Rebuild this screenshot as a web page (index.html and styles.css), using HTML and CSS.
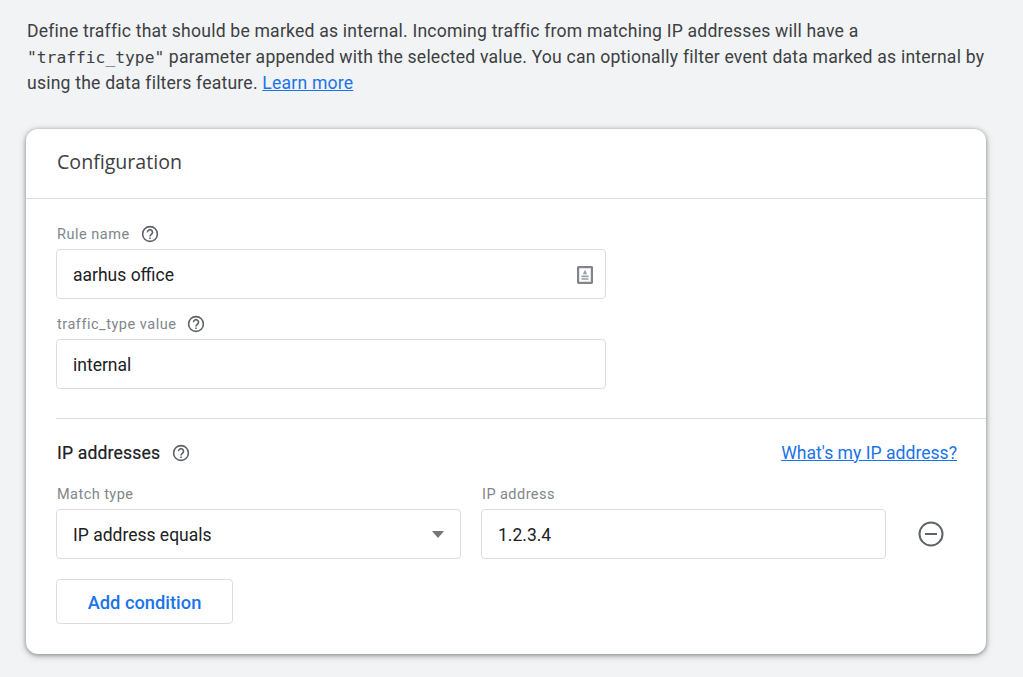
FILE: index.html
```html
<!DOCTYPE html>
<html lang="en">
<head>
<meta charset="utf-8">
<title>Internal traffic</title>
<link rel="stylesheet" href="styles.css">
</head>
<body>
<p class="intro">Define traffic that should be marked as internal. Incoming traffic from matching IP addresses will have a <code class="mono">"traffic_type"</code> parameter appended with the selected value. You can optionally filter event data marked as internal by using the data filters feature. <a class="link" href="#">Learn more</a></p>
<main class="card">
  <h2 class="card-title">Configuration</h2>
  <section class="card-top">
    <div class="label-row"><span class="label">Rule name</span>
      <svg class="help" viewBox="0 0 18 18"><circle cx="9" cy="9" r="7.4"/><path d="M6.5 7.2a2.5 2.5 0 1 1 4 2c-.9.7-1.5 1.1-1.5 2.3"/><path class="dot" d="M8.2 12.5h1.6v1.6H8.2z"/></svg>
    </div>
    <div class="field field-wide"><span>aarhus office</span>
      <svg class="contact" viewBox="0 0 16 18"><rect x="1" y="1" width="14" height="16" rx="1.2"/><path class="solid" d="M8 3.8l2.2 4.4H5.8zM4.5 9.6h7v1.6h-7zM4.5 12.2h7v1.6h-7z"/></svg>
    </div>
    <div class="label-row label-row-second"><span class="label">traffic_type value</span>
      <svg class="help" viewBox="0 0 18 18"><circle cx="9" cy="9" r="7.4"/><path d="M6.5 7.2a2.5 2.5 0 1 1 4 2c-.9.7-1.5 1.1-1.5 2.3"/><path class="dot" d="M8.2 12.5h1.6v1.6H8.2z"/></svg>
    </div>
    <div class="field field-wide"><span>internal</span></div>
  </section>
  <section class="card-ip">
    <div class="ip-head">
      <div class="ip-title"><h3 class="section-title">IP addresses</h3>
        <svg class="help" viewBox="0 0 18 18"><circle cx="9" cy="9" r="7.4"/><path d="M6.5 7.2a2.5 2.5 0 1 1 4 2c-.9.7-1.5 1.1-1.5 2.3"/><path class="dot" d="M8.2 12.5h1.6v1.6H8.2z"/></svg>
      </div>
      <a class="link" href="#">What's my IP address?</a>
    </div>
    <div class="cond">
      <div class="cond-col">
        <span class="label">Match type</span>
        <div class="field"><span>IP address equals</span><i class="caret"></i></div>
      </div>
      <div class="cond-col">
        <span class="label">IP address</span>
        <div class="field"><span>1.2.3.4</span></div>
      </div>
      <svg class="remove" viewBox="0 0 26 26"><circle cx="13" cy="13" r="11.5"/><path d="M7 13h12"/></svg>
    </div>
    <button class="add" type="button">Add condition</button>
  </section>
</main>
</body>
</html>
```

FILE: styles.css
```css
* { box-sizing: border-box; }
html, body { margin: 0; height: 100%; overflow: hidden; }
body {
  background: #f1f3f4;
  font-family: Roboto, "Liberation Sans", sans-serif;
  color: #3c4043;
  padding: 18px 37px 0 27px;
  height: 677px;
}
.intro {
  margin: 0 0 33px;
  font-size: 17.6px;
  letter-spacing: .2px;
  line-height: 26px;
  width: 960px;
}
.mono { font-family: "DejaVu Sans Mono", "Liberation Mono", monospace; font-size: 16.3px; letter-spacing: 0; line-height: 1; }
.link { color: #1a73e8; text-decoration: underline; }
.card {
  margin-left: -1px;
  width: 960px;
  height: 525px;
  background: #fff;
  border-radius: 12px;
  box-shadow: 0 1px 4px rgba(60,64,67,.55), 0 2px 8px rgba(60,64,67,.2);
}
.card-title {
  margin: 0;
  height: 70px;
  padding: 0 31px 4px;
  display: flex;
  align-items: center;
  font-family: "Open Sans", Roboto, sans-serif;
  font-weight: 400;
  font-size: 19.6px;
  color: #3c4043;
  border-bottom: 1px solid #dadce0;
}
.card-top { padding: 25px 0 0 30px; height: 219px; }
.label-row { display: flex; align-items: center; gap: 11px; height: 20px; margin-bottom: 5px; padding-left: 1px; }
.label-row-second { margin-top: 15px; margin-bottom: 5px; }
.label { font-size: 14.5px; color: #80868b; letter-spacing: .52px; }
.help { width: 18px; height: 18px; flex: none; fill: none; stroke: #5f6368; stroke-width: 1.6; }
.help .dot { fill: #5f6368; stroke: none; }
.field {
  height: 50px;
  border: 1px solid #dadce0;
  border-radius: 4px;
  padding: 1px 16px 0;
  display: flex;
  align-items: center;
  justify-content: space-between;
  font-size: 17.5px;
  color: #202124;
  background: #fff;
}
.field-wide { width: 550px; }
.contact { width: 16px; height: 18px; margin-right: -4px; fill: none; stroke: #80868b; stroke-width: 2.4; }
.contact .solid { fill: #9aa0a6; stroke: none; }
.card-ip { margin-left: 30px; border-top: 1px solid #dadce0; padding: 20px 29px 0 0; }
.ip-head { display: flex; align-items: center; justify-content: space-between; height: 27px; font-size: 17.6px; }
.ip-title { display: flex; align-items: center; gap: 12px; padding-left: 1px; }
.section-title { margin: 0; font-size: 17.6px; letter-spacing: .15px; font-weight: 400; color: #202124; -webkit-text-stroke: .2px #202124; }
.cond { display: flex; gap: 20px; margin-top: 19px; align-items: flex-end; }
.cond-col { width: 405px; display: flex; flex-direction: column; gap: 5px; }
.cond-col .label { height: 19px; line-height: 19px; padding-left: 1px; letter-spacing: .45px; }
.caret { width: 0; height: 0; border: 6.5px solid transparent; border-top: 7px solid #757575; border-bottom: 0; margin-right: 0; }
.remove { width: 26px; height: 26px; margin: 0 0 12px 12px; fill: none; stroke: #5f6368; stroke-width: 2; }
.add {
  margin-top: 20px;
  width: 177px;
  height: 45px;
  padding-top: 2px;
  background: #fff;
  border: 1px solid #dadce0;
  border-radius: 4px;
  font-family: Roboto, sans-serif;
  font-size: 18.3px;
  font-weight: 500;
  color: #1a73e8;
}
```
